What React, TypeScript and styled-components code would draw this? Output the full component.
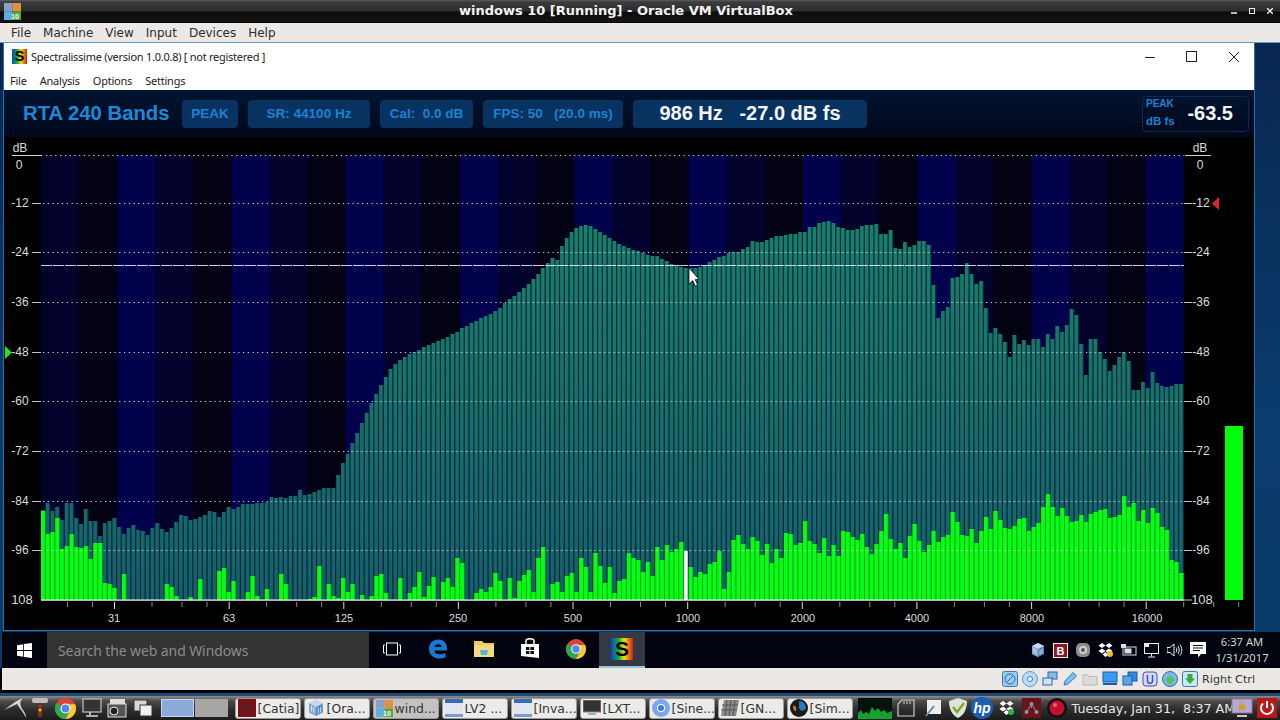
import React from "react";
import styled, { createGlobalStyle } from "styled-components";

const Global = createGlobalStyle`
  html, body { margin: 0; padding: 0; background: #000; overflow: hidden; }
  * { box-sizing: border-box; }
`;

const TEAL = [
  510,503,511,507,520,503,503,518,524,509, 521,521,536,523,521,518,527,534,528,525,
  530,531,535,528,523,529,532,528,522,515, 516,520,519,517,515,511,512,517,512,507,
  509,507,504,504,504,503,503,502,497,498, 497,498,496,496,490,495,494,492,490,488,
  488,488,475,463,454,443,433,423,413,403, 394,385,377,369,364,360,357,354,352,350,
  347,345,343,341,339,337,334,332,328,326, 323,321,318,316,314,311,308,303,299,296,
  292,288,284,279,274,268,263,258,260,246, 238,232,228,226,225,226,229,232,235,238,
  241,244,246,248,250,251,253,255,256,256, 259,261,264,265,267,268,268,268,267,265,
  262,260,257,256,253,252,252,249,247,241, 242,242,240,238,236,236,235,
  234,234,232,232,227,227,223,222,221,223,227,228,230,230,229,226,225,225,224,234,234,230,
  248,249,242,247,245,241,241,245,285,318,311,307,278,277,274,263,274,284,281,308,
  333,328,334,342,357,335,344,340,345,339,339,347,334,339,326,332,325,309,315,
  344,375,339,339,352,359,371,365,357,352,361,390,390,382,388,372,383,386,387,386,384,384,
];

const GREEN = [
  511,534,532,518,549,546,534,547,548,546, 559,543,543,583,584,588,600,574,600,600,
  600,600,600,600,600,600,584,587,596,600, 600,597,600,579,600,600,600,571,568,592,
  581,600,600,592,576,596,600,589,600,600, 574,584,600,600,600,600,599,597,566,600,
  584,596,598,578,592,584,600,595,600,596, 576,574,593,600,600,578,600,593,587,572,
  597,586,577,600,582,578,587,558,563,600, 600,593,589,592,587,573,581,600,578,598,
  581,575,570,592,558,547,600,584,582,592, 576,573,592,558,567,592,553,566,583,567,
  593,581,579,553,558,560,572,562,576,547, 560,545,552,549,542,551,567,577,572,574,
  564,562,551,589,572,540,535,544,549,537, 541,555,544,563,549,558,533,534,545,543,
  521,541,544,553,538,556,545,556,531,532, 537,540,534,547,554,544,531,514,539,549,
  543,558,536,524,541,552,545,531,542,537, 535,512,522,535,536,529,543,531,517,529,
  511,520,528,529,526,519,518,531,527,523, 507,494,507,516,508,516,522,521,515,522,
  514,512,510,509,518,517,515,496,507,503, 521,510,523,508,513,527,530,560,562,573,
];

const PITCH = 4.7625;
const LEFT = 41;
const barX = (i: number) => LEFT + i * PITCH;
const GRID = [
  { y: 203.5, label: "-12" }, { y: 252.5, label: "-24" }, { y: 302.5, label: "-36" }, { y: 352.5, label: "-48" },
  { y: 401.5, label: "-60" }, { y: 451.5, label: "-72" }, { y: 501.5, label: "-84" }, { y: 550.5, label: "-96" },
];
const FREQS = [
  [114, "31"], [229, "63"], [344, "125"], [458, "250"], [573, "500"],
  [688, "1000"], [803, "2000"], [917, "4000"], [1032, "8000"], [1147, "16000"],
] as const;
const STRIPES = ["#02022c", "#020212", "#01014c"];

function gridPaths(y: number) {
  let on = "";
  let off = "";
  TEAL.forEach((top, i) => {
    const x = barX(i);
    if (top <= y) on += `M${(x + 0.5).toFixed(2)} ${y}h2.4`;
    else off += `M${(x + 2).toFixed(2)} ${y}h1.2`;
  });
  return { on, off };
}
const minorTicks: number[] = [];
const majorTicks: number[] = [114.5, 229.2, 343.8, 458.4, 573, 687.7, 802.3, 916.9, 1031.6, 1146.2];
majorTicks.forEach((m) => {
  [-47, -22, 37.5, 67.5, 92.5].forEach((d, k) => {
    if (k < 2 && m !== 114.5) return;
    minorTicks.push(m + d);
  });
});

const AxisText = styled.text<{ $size?: number }>`
  font-family: "Liberation Sans", Arial, sans-serif;
  font-size: ${(p) => p.$size ?? 12}px;
  fill: #dcdcdc;
  text-anchor: middle;
  dominant-baseline: central;
`;
const ChartSvg = styled.svg`
  display: block;
  flex: 1;
  width: 100%;
  background: #000;
`;

function Chart() {
  return (
    <ChartSvg viewBox="4 137 1250 493">
      <defs>
        <linearGradient id="teal" gradientUnits="userSpaceOnUse" x1="0" y1="220" x2="0" y2="600">
          <stop offset="0" stopColor="#17806c" />
          <stop offset="1" stopColor="#15606e" />
        </linearGradient>
      </defs>
      {Array.from({ length: 30 }, (_, k) => (
        <rect key={k} x={LEFT + k * 38.1} y={155} width={38.2} height={445} fill={STRIPES[k % 3]} />
      ))}
      {TEAL.map((top, i) => (
        <g key={i}>
          <rect x={barX(i)} y={top} width={PITCH} height={600 - top} fill="#082c34" />
          <rect x={barX(i)} y={top} width={3.5} height={600 - top} fill="url(#teal)" />
        </g>
      ))}
      {GREEN.map((top, i) =>
        top < 600 ? (
          <g key={i}>
            <rect x={barX(i)} y={top} width={PITCH} height={600 - top} fill={i === 135 ? "#082c34" : "#08a014"} />
            <rect x={barX(i)} y={top} width={3.8} height={600 - top} fill={i === 135 ? "#fff" : "#04ff14"} />
          </g>
        ) : null,
      )}
      {GRID.map((g) => {
        const { on, off } = gridPaths(g.y);
        return (
          <g key={g.y}>
            <path d={on} stroke="#d8eeee" strokeWidth={1} opacity={0.5} />
            <path d={off} stroke="#fff" strokeWidth={1} opacity={0.85} />
            <path d={`M32 ${g.y}H41M1184 ${g.y}H1192`} stroke="#c4c4c4" strokeWidth={1} />
            <AxisText x={20} y={g.y - 0.5}>{g.label}</AxisText>
            <AxisText x={1201} y={g.y - 0.5}>{g.label}</AxisText>
          </g>
        );
      })}
      <path d="M41 155.5H1184" stroke="#fff" strokeWidth={1} strokeDasharray="1.2 3.56" opacity={0.85} />
      <path d="M12 155.5H41M1185 155.5H1211" stroke="#d0d0d0" strokeWidth={1} />
      <AxisText x={20} y={148}>dB</AxisText>
      <AxisText x={19} y={165}>0</AxisText>
      <AxisText x={1200} y={148}>dB</AxisText>
      <AxisText x={1200} y={165}>0</AxisText>
      <AxisText x={22} y={599} $size={13}>108</AxisText>
      <AxisText x={1202} y={599} $size={13}>108</AxisText>
      <path d="M1184 600H1192" stroke="#c4c4c4" strokeWidth={1} />
      <path d="M41 265.5H1184" stroke="#e4e4ff" strokeWidth={1} strokeDasharray="11 1" opacity={0.9} />
      <rect x={41} y={599.5} width={1143} height={1.2} fill="#fff" />
      {minorTicks.map((x) => (
        <path key={x} d={`M${x} 602V607`} stroke="#8c8c8c" strokeWidth={1} />
      ))}
      {majorTicks.map((x) => (
        <path key={x} d={`M${x} 602V609`} stroke="#e0e0e0" strokeWidth={1} />
      ))}
      {FREQS.map(([x, t]) => (
        <AxisText key={t} x={x} y={618} $size={11}>{t}</AxisText>
      ))}
      <rect x={1225} y={426} width={18} height={174} fill="#00ff0a" />
      <path d="M5 346V359L12 352.5Z" fill="#22e32a" />
      <path d="M1219 197V210L1212 203.5Z" fill="#e0202a" />
      <path d="M689 268V284L692.8 280.6L695.2 286L697.6 285L695.2 279.6L699 279.2Z" fill="#fff" stroke="#000" strokeWidth={0.7} />
    </ChartSvg>
  );
}

/* ---------- Icons ---------- */
const IconSvg = styled.svg`
  display: block;
  flex: none;
`;
type I = { s?: number };

const Chrome = ({ s = 20 }: I) => (
  <IconSvg width={s} height={s} viewBox="0 0 20 20">
    <circle cx="10" cy="10" r="10" fill="#db4437" />
    <path d="M10 10L1.3 5A10 10 0 0 0 10 20L15 11Z" fill="#2da94f" />
    <path d="M10 6H19.2A10 10 0 0 1 10 20L15 11Z" fill="#fcc934" />
    <circle cx="10" cy="10" r="4.8" fill="#fff" />
    <circle cx="10" cy="10" r="3.7" fill="#4a8af0" />
  </IconSvg>
);
const SpectralIcon = ({ s = 15, id }: I & { id: string }) => (
  <IconSvg width={s} height={s} viewBox="0 0 20 20">
    <defs>
      <linearGradient id={id} x1="0" y1="0" x2="1" y2="0">
        <stop offset="0" stopColor="#1040d0" />
        <stop offset="0.35" stopColor="#10b040" />
        <stop offset="0.6" stopColor="#f0e010" />
        <stop offset="1" stopColor="#e01818" />
      </linearGradient>
    </defs>
    <rect width="20" height="20" fill={`url(#${id})`} />
    <text x="10" y="16.5" textAnchor="middle" fontFamily="Liberation Sans" fontWeight="700" fontSize="19" fill="#000">S</text>
  </IconSvg>
);
const WinLogo = () => (
  <IconSvg width={15} height={15} viewBox="0 0 15 15">
    <path d="M0 2.2L6.2 1.2V7H0ZM7 1L15 0V7H7ZM0 8H6.2V13.8L0 12.8ZM7 8H15V15L7 14Z" fill="#fff" />
  </IconSvg>
);
const TaskView = () => (
  <IconSvg width={18} height={14} viewBox="0 0 18 14">
    <rect x="3.5" y="1" width="11" height="12" fill="none" stroke="#fff" />
    <path d="M2 3H.5V11H2M16 3H17.5V11H16" fill="none" stroke="#fff" />
  </IconSvg>
);
const Edge = () => (
  <IconSvg width={20} height={20} viewBox="0 0 20 20">
    <path d="M1 10C1 4 5 .5 10.5.5C16 .5 19.5 4.5 19 11.5H6.5C6.8 15.5 12 16.5 17.5 14V18.5C11 21 1.5 19.5 1 10ZM6.5 8H13.5C13.5 4 7.5 4 6.5 8Z" fill="#1a78d2" />
  </IconSvg>
);
const Folder = () => (
  <IconSvg width={20} height={18} viewBox="0 0 20 18">
    <path d="M0 1H8L10 3H20V17H0Z" fill="#e9c96a" />
    <rect y="5" width="20" height="12" fill="#f5d97e" />
    <path d="M6 10H14L13 15H7Z" fill="#4cb8d8" />
  </IconSvg>
);
const Store = () => (
  <IconSvg width={20} height={22} viewBox="0 0 20 22">
    <path d="M1 6H19V20L1 18Z" fill="#fff" />
    <path d="M6 6V3C6 0 14 0 14 3V6" fill="none" stroke="#fff" strokeWidth="1.5" />
    <path d="M6 9H9.4V12H6ZM10.4 9H14V12H10.4ZM6 13H9.4V16H6ZM10.4 13H14V16H10.4Z" fill="#111" />
  </IconSvg>
);
const VBoxCube = ({ s = 16 }: I) => (
  <IconSvg width={s} height={s} viewBox="0 0 16 16">
    <path d="M8 1L14 4V12L8 15L2 12V4Z" fill="#5a86c0" />
    <path d="M8 1L14 4L8 7L2 4Z" fill="#c8d8ee" />
    <path d="M8 7V15L2 12V4Z" fill="#8aa8d0" />
    <path d="M4 6V11M6 7V12M10 8V13M12 7V12" stroke="#e8eef8" strokeWidth=".7" />
  </IconSvg>
);
const TrayB = () => (
  <IconSvg width={15} height={15} viewBox="0 0 15 15">
    <rect width="15" height="15" fill="#eee" />
    <rect x="1" y="1" width="13" height="13" fill="#8a1820" />
    <text x="7.5" y="11.5" textAnchor="middle" fontFamily="Liberation Sans" fontWeight="700" fontSize="11" fill="#fff">B</text>
  </IconSvg>
);
const TrayWebcam = () => (
  <IconSvg width={16} height={16} viewBox="0 0 16 16">
    <rect x="1" y="1" width="14" height="14" rx="5" fill="#8d8d8d" />
    <circle cx="8" cy="8" r="4" fill="#d0d0d0" />
    <circle cx="8" cy="8" r="2" fill="#555" />
  </IconSvg>
);
const Dropbox = ({ color = "#fff", badge }: { color?: string; badge: string }) => (
  <IconSvg width={16} height={16} viewBox="0 0 16 16">
    <path d="M4 1L7.5 3.5L4 6L.5 3.5ZM11 1L14.5 3.5L11 6L7.5 3.5ZM4 6.5L7.5 9L4 11.5L.5 9ZM11 6.5L14.5 9L11 11.5L7.5 9ZM7.5 10L10.5 12.5L7.5 15L4.5 12.5Z" fill={color} />
    <circle cx="12" cy="12" r="3" fill={badge} />
  </IconSvg>
);
const TrayPower = () => (
  <IconSvg width={16} height={12} viewBox="0 0 16 12">
    <rect x="0" y="0" width="5" height="4" fill="#ddd" />
    <rect x="2" y="3" width="13" height="8" fill="none" stroke="#ddd" />
    <rect x="3.5" y="4.5" width="7" height="5" fill="#ddd" />
  </IconSvg>
);
const TrayNet = () => (
  <IconSvg width={16} height={15} viewBox="0 0 16 15">
    <rect x=".5" y=".5" width="14" height="10" fill="none" stroke="#eee" />
    <path d="M7.5 11V13.5M4 14H11" stroke="#eee" />
    <rect x="0" y="0" width="5" height="4" fill="#eee" />
  </IconSvg>
);
const TraySpeaker = () => (
  <IconSvg width={16} height={14} viewBox="0 0 16 14">
    <path d="M0 4.5H3L7 1V13L3 9.5H0Z" fill="none" stroke="#eee" />
    <path d="M9 4.5C10 6 10 8 9 9.5M11 3C12.6 5.5 12.6 8.5 11 11M13 1.5C15.4 5 15.4 9 13 12.5" fill="none" stroke="#eee" />
  </IconSvg>
);
const TrayNote = () => (
  <IconSvg width={16} height={16} viewBox="0 0 16 16">
    <path d="M0 0H16V12H11L8 15.5V12H0Z" fill="#fff" />
    <path d="M3 3.5H13M3 6H13M3 8.5H10" stroke="#111" />
  </IconSvg>
);
const Sb = ({ children }: { children: React.ReactNode }) => (
  <IconSvg width={16} height={16} viewBox="0 0 16 16">{children}</IconSvg>
);
const StatusIcons = [
  <Sb key="0"><rect x=".5" y=".5" width="15" height="15" rx="2" fill="#9ccbef" stroke="#3a7ab8" /><circle cx="8" cy="8" r="5" fill="none" stroke="#2a70b0" /><path d="M5 11L11 5" stroke="#2a70b0" /></Sb>,
  <Sb key="1"><circle cx="8" cy="8" r="7.5" fill="#bcdcf4" stroke="#5a9ad0" /><circle cx="8" cy="8" r="2.5" fill="#fff" stroke="#3a7ab8" /></Sb>,
  <Sb key="2"><rect x="6" y="1" width="9" height="7" fill="#8cb8e4" stroke="#2a66a8" /><rect x="1" y="7" width="9" height="7" fill="#cfe2f6" stroke="#2a66a8" /></Sb>,
  <Sb key="3"><path d="M2 14L3 10L11 1.5L14.5 5L6 13Z" fill="#7cc0f0" stroke="#2a78c0" /></Sb>,
  <Sb key="4"><path d="M1 4H6L7 5.5H15V14H1Z" fill="#dcdcd8" stroke="#b8b8b4" /></Sb>,
  <Sb key="5"><rect x="1" y="1" width="14" height="10" fill="#3a9af0" stroke="#1a5ca8" /><path d="M1 13H15" stroke="#1a5ca8" strokeWidth="2" /></Sb>,
  <Sb key="6"><rect x="6" y="1" width="9" height="9" fill="#3a86dc" stroke="#1a5ca8" /><rect x="1" y="5" width="9" height="9" fill="#5aa4ec" stroke="#1a5ca8" /></Sb>,
  <Sb key="7"><rect x="1" y="1" width="14" height="14" rx="3" fill="#d8d8f4" stroke="#3a50b8" /><path d="M5.5 4V10C5.5 13 10.5 13 10.5 10V4" fill="none" stroke="#3a50b8" strokeWidth="1.5" /></Sb>,
  <Sb key="8"><circle cx="8" cy="8" r="7.5" fill="#7cb8ec" stroke="#2a70b0" /><path d="M3 9L8 4L13 9L8 14Z" fill="#58c058" /></Sb>,
  <Sb key="9"><rect x=".5" y=".5" width="15" height="15" rx="2" fill="#cfe4f6" stroke="#3a7ab8" /><path d="M5.5 3H10.5V7.5H13L8 13L3 7.5H5.5Z" fill="#2fb03a" /></Sb>,
];
const Dragon = () => (
  <IconSvg width={24} height={22} viewBox="0 0 24 22">
    <path d="M1 13C7 9 12 4 20 1C17 4 16 7 20 13C22 16 23 18 23 21C21 16 17 12 14 7C10 9 5 11 1 13Z" fill="#d4d4d4" />
  </IconSvg>
);
const Usb = () => (
  <IconSvg width={16} height={22} viewBox="0 0 16 22">
    <rect x="0" y="1" width="16" height="5" rx="2" fill="#bdbdbd" />
    <rect x="6" y="6" width="4" height="14" fill="#8a2a18" />
    <circle cx="8" cy="13" r="1.5" fill="#e8c030" />
  </IconSvg>
);
const Monitor = () => (
  <IconSvg width={20} height={20} viewBox="0 0 20 20">
    <rect x="1" y="1" width="18" height="13" fill="#333" stroke="#ddd" />
    <path d="M8 14V17M4 18H16" stroke="#ddd" strokeWidth="1.5" />
  </IconSvg>
);
const Camera = () => (
  <IconSvg width={20} height={20} viewBox="0 0 20 20">
    <rect x="3" y="1" width="15" height="5" fill="#ddd" />
    <rect x="1" y="6" width="18" height="13" fill="#555" stroke="#ddd" />
    <circle cx="7" cy="13" r="4" fill="#222" stroke="#eee" />
  </IconSvg>
);
const Windows = () => (
  <IconSvg width={20} height={18} viewBox="0 0 20 18">
    <rect x="1" y="1" width="13" height="11" fill="#d8d8d8" stroke="#333" />
    <rect x="7" y="6" width="12" height="11" fill="#efefef" stroke="#333" />
  </IconSvg>
);
const VBoxApp = () => (
  <IconSvg width={17} height={17} viewBox="0 0 17 17">
    <rect x="0" y="0" width="8.5" height="8.5" fill="#8aa0c8" />
    <rect x="8.5" y="0" width="8.5" height="8.5" fill="#e09040" />
    <rect x="0" y="8.5" width="8.5" height="8.5" fill="#5cb0e0" />
    <rect x="8.5" y="8.5" width="8.5" height="8.5" fill="#50a840" />
    <text x="11" y="15.5" textAnchor="middle" fontFamily="Liberation Sans" fontWeight="700" fontSize="7" fill="#fff">10</text>
  </IconSvg>
);
const Catia = () => (
  <IconSvg width={18} height={18} viewBox="0 0 18 18">
    <rect width="18" height="18" fill="#7a1018" />
    <path d="M4 4L14 13M4 10L9 13" stroke="#333" strokeWidth="1.6" />
  </IconSvg>
);
const BlueWin = () => (
  <IconSvg width={18} height={18} viewBox="0 0 18 18">
    <rect width="18" height="18" fill="#dfe6f0" />
    <rect width="18" height="4" fill="#3a6cb0" />
    <rect y="15" width="18" height="3" fill="#7a9cc8" />
  </IconSvg>
);
const LxtMon = () => (
  <IconSvg width={18} height={16} viewBox="0 0 18 16">
    <rect x="0" y="0" width="18" height="12" fill="#333" stroke="#888" />
    <path d="M5 14H13" stroke="#aaa" strokeWidth="2" />
  </IconSvg>
);
const BlueChrome = () => (
  <IconSvg width={18} height={18} viewBox="0 0 18 18">
    <circle cx="9" cy="9" r="9" fill="#7ea6ec" />
    <circle cx="9" cy="9" r="4" fill="#fff" />
    <circle cx="9" cy="9" r="3" fill="#3c78d8" />
  </IconSvg>
);
const Gnd = () => (
  <IconSvg width={18} height={16} viewBox="0 0 18 16">
    <path d="M3 0H18L15 16H0Z" fill="#8a8a8a" />
    <path d="M6 0L4 16M10 0L8 16M14 0L12 16M1 5H17M0 10H16" stroke="#555" />
  </IconSvg>
);
const Globe = () => (
  <IconSvg width={18} height={18} viewBox="0 0 18 18">
    <circle cx="9" cy="9" r="9" fill="#1b1b1b" />
    <path d="M9 2A7 7 0 0 1 16 9C14 13 10 12 9 9Z" fill="#2a7ab8" />
    <path d="M3 7C5 6 7 8 6 12C4 12 3 10 3 7Z" fill="#c87830" />
  </IconSvg>
);
const SdCard = () => (
  <IconSvg width={18} height={18} viewBox="0 0 18 18">
    <path d="M5 1H17V17H1V5Z" fill="none" stroke="#ccc" strokeWidth="1.2" />
    <path d="M7 2V5M10 2V5M13 2V5" stroke="#ccc" />
  </IconSvg>
);
const PenNote = () => (
  <IconSvg width={16} height={17} viewBox="0 0 16 17">
    <rect x="2" y="0" width="14" height="14" fill="#eee" />
    <path d="M1 16L9 6" stroke="#6a86b8" strokeWidth="2" />
  </IconSvg>
);
const Shield = () => (
  <IconSvg width={18} height={20} viewBox="0 0 18 20">
    <path d="M9 0L18 3C18 11 15 17 9 20C3 17 0 11 0 3Z" fill="#dfe3d8" />
    <path d="M4 9L8 14L15 5" fill="none" stroke="#7aa830" strokeWidth="2.4" />
  </IconSvg>
);
const Hp = () => (
  <IconSvg width={22} height={22} viewBox="0 0 22 22">
    <circle cx="11" cy="11" r="11" fill="#1a5fb4" />
    <text x="11" y="16" textAnchor="middle" fontFamily="Liberation Sans" fontStyle="italic" fontWeight="700" fontSize="14" fill="#fff">hp</text>
  </IconSvg>
);
const RedNet = () => (
  <IconSvg width={19} height={20} viewBox="0 0 19 20">
    <rect width="19" height="20" fill="#6a1418" />
    <circle cx="9.5" cy="6" r="2" fill="#8a90b0" />
    <circle cx="4.5" cy="14" r="2" fill="#8a90b0" />
    <circle cx="14.5" cy="14" r="2" fill="#8a90b0" />
    <path d="M9.5 6L4.5 14M9.5 6L14.5 14M9.5 10V6" stroke="#8a90b0" />
  </IconSvg>
);
const Record = () => (
  <IconSvg width={20} height={20} viewBox="0 0 20 20">
    <circle cx="10" cy="10" r="10" fill="#111" />
    <circle cx="10" cy="10" r="7.5" fill="#c41030" />
    <circle cx="8" cy="7" r="2" fill="#ee6070" />
  </IconSvg>
);
const LockScreen = () => (
  <IconSvg width={22} height={20} viewBox="0 0 22 20">
    <rect x="1" y="1" width="20" height="14" fill="#b8a8d8" stroke="#8a7aa8" />
    <path d="M6 18H16" stroke="#ccc" strokeWidth="2" />
    <rect x="8" y="7" width="6" height="5" fill="#d0a020" />
    <path d="M9 7V5C9 3 13 3 13 5V7" fill="none" stroke="#d0a020" />
  </IconSvg>
);
const PowerBtn = () => (
  <IconSvg width={20} height={20} viewBox="0 0 20 20">
    <rect width="20" height="20" fill="#b81818" />
    <path d="M6 5.5A6 6 0 1 0 14 5.5" fill="none" stroke="#fff" strokeWidth="2" />
    <path d="M10 3V10" stroke="#fff" strokeWidth="2" />
  </IconSvg>
);

/* ---------- Layout ---------- */
const Screen = styled.div`
  width: 1280px;
  height: 720px;
  display: flex;
  flex-direction: column;
  background: #000;
  overflow: hidden;
`;
const HostTitle = styled.div`
  position: relative;
  height: 23px;
  flex: none;
  display: flex;
  align-items: center;
  justify-content: space-between;
  padding: 0 7px 0 4px;
  background: linear-gradient(#5c5c5c 0, #3c3c3c 2px, #2c2c2c 11px, #0c0c0c 12px, #141414 100%);
  border-bottom: 1px solid #000;
`;
const HostTitleText = styled.div`
  position: absolute;
  left: 459px;
  top: 2px;
  font: bold 13px "DejaVu Sans", sans-serif;
  line-height: 17px;
  color: #f4f4f4;
  white-space: nowrap;
`;
const HostButtons = styled.div`
  display: flex;
  gap: 12px;
  align-items: center;
`;
const HostMenu = styled.div`
  height: 19px;
  flex: none;
  display: flex;
  gap: 12px;
  align-items: center;
  padding-left: 11px;
  background: #ece8e6;
  font: 12px "DejaVu Sans", sans-serif;
  color: #2c2c2c;
`;
const Guest = styled.div`
  height: 626px;
  flex: none;
  display: flex;
  flex-direction: column;
  border-top: 1px solid #5d9ccb;
  background: linear-gradient(#082650, #0b3c6e 60%, #0a3a68);
`;
const Win = styled.div`
  width: 1252px;
  height: 588px;
  margin-left: 3px;
  flex: none;
  display: flex;
  flex-direction: column;
  background: #000;
  border: 1px solid #2f6ea4;
  border-top: 0;
`;
const WinTitle = styled.div`
  height: 27px;
  flex: none;
  display: flex;
  align-items: center;
  padding: 0 14px 0 8px;
  background: #fff;
`;
const WinTitleText = styled.span`
  margin-left: 4px;
  font: 11px "Noto Sans", sans-serif;
  letter-spacing: -0.26px;
  color: #222;
  white-space: pre;
`;
const WinButtons = styled.div`
  margin-left: auto;
  display: flex;
  gap: 30px;
  align-items: center;
`;
const WinMenu = styled.div`
  height: 20px;
  flex: none;
  display: flex;
  gap: 13px;
  align-items: center;
  padding-left: 6px;
  background: #fff;
  font: 11px "Noto Sans", sans-serif;
  letter-spacing: -0.22px;
  color: #222;
`;
const Header = styled.div`
  height: 47px;
  flex: none;
  display: flex;
  align-items: center;
  padding: 0 5px 0 19px;
  background: linear-gradient(#021531, #00081c);
`;
const AppTitle = styled.div`
  width: 159px;
  flex: none;
  font: bold 20.3px "Liberation Sans", Arial, sans-serif;
  color: #1e88d8;
  white-space: nowrap;
`;
const Pill = styled.div<{ $w: number; $bright?: boolean }>`
  width: ${(p) => p.$w}px;
  height: 28px;
  flex: none;
  margin-right: 10px;
  display: flex;
  align-items: center;
  justify-content: center;
  border-radius: 4px;
  background: #083260;
  font: ${(p) => (p.$bright ? "bold 20px" : "bold 13.5px")} "Liberation Sans", Arial, sans-serif;
  color: ${(p) => (p.$bright ? "#f2f6fa" : "#1c82d2")};
  white-space: pre;
`;
const PeakBox = styled.div`
  margin-left: auto;
  width: 107px;
  height: 36px;
  flex: none;
  position: relative;
  display: flex;
  align-items: center;
  justify-content: flex-end;
  padding-right: 15px;
  border: 1px solid #0b2a4e;
  border-radius: 4px;
  font: bold 20px "Liberation Sans", Arial, sans-serif;
  color: #f2f6fa;
`;
const PeakCaption = styled.div`
  position: absolute;
  left: 3px;
  top: 0;
  bottom: 0;
  display: flex;
  flex-direction: column;
  justify-content: space-between;
  color: #1c82d2;
  font-family: "Liberation Sans", Arial, sans-serif;
  font-weight: bold;
`;
const PeakTop = styled.span`
  font-size: 10px;
  line-height: 13px;
`;
const PeakUnit = styled.span`
  font-size: 11.5px;
  line-height: 19px;
`;
const Taskbar = styled.div`
  height: 36px;
  margin: 1px 0 0 2px;
  flex: none;
  display: flex;
  align-items: stretch;
  background: #01040e;
`;
const StartCell = styled.div`
  width: 45px;
  flex: none;
  display: flex;
  align-items: center;
  justify-content: center;
`;
const SearchBox = styled.div`
  width: 322px;
  flex: none;
  display: flex;
  align-items: center;
  padding-left: 11px;
  background: #333;
  font: 14px "Noto Sans", sans-serif;
  color: #8c8c8c;
  letter-spacing: -0.1px;
`;
const TaskCell = styled.div<{ $active?: boolean }>`
  width: 46px;
  flex: none;
  display: flex;
  align-items: center;
  justify-content: center;
  background: ${(p) => (p.$active ? "#333a44" : "transparent")};
  border-bottom: 2px solid ${(p) => (p.$active ? "#9cc4e4" : "transparent")};
`;
const Tray = styled.div`
  margin-left: auto;
  display: flex;
  align-items: center;
  gap: 7px;
  padding-right: 9px;
`;
const Clock = styled.div`
  width: 58px;
  text-align: center;
  font: 11.2px "Noto Sans", sans-serif;
  line-height: 16px;
  color: #d4d4d4;
  white-space: nowrap;
`;
const HostStatus = styled.div`
  height: 22px;
  margin-left: 2px;
  flex: none;
  display: flex;
  align-items: center;
  justify-content: flex-end;
  gap: 4px;
  padding-right: 25px;
  background: #ece8e6;
`;
const RightCtrl = styled.span`
  font: 11.2px "DejaVu Sans", sans-serif;
  color: #333;
  white-space: nowrap;
`;
const PanelStrip = styled.div`
  height: 30px;
  flex: none;
  padding-top: 6px;
  background: linear-gradient(#000 0, #000 3px, #1f4a72 3px, #1f4a72 6px, transparent 6px);
`;
const Panel = styled.div`
  height: 24px;
  display: flex;
  align-items: center;
  background: linear-gradient(#8c8c8c 0, #4a4a4a 5px, #2c2c2c 14px, #1c1c1c 100%);
`;
const PanelCell = styled.div<{ $w?: number }>`
  width: ${(p) => p.$w ?? 25.6}px;
  flex: none;
  display: flex;
  align-items: center;
  justify-content: center;
`;
const PanelIcons = styled.div`
  display: flex;
  padding-left: 2px;
`;
const Workspace = styled.div<{ $on?: boolean }>`
  width: 33px;
  height: 18px;
  flex: none;
  margin-left: ${(p) => (p.$on ? 5 : 1)}px;
  background: ${(p) => (p.$on ? "#8caad8" : "#a8a6a4")};
  border: 1px solid ${(p) => (p.$on ? "#c8d8f0" : "#a8a6a4")};
`;
const Tasks = styled.div`
  display: flex;
  gap: 3px;
  margin-left: 7px;
`;
const TaskBtn = styled.div<{ $active?: boolean }>`
  width: 66px;
  height: 21px;
  flex: none;
  display: flex;
  align-items: center;
  gap: 2px;
  padding-left: 2px;
  border: 1px solid #9a9a9a;
  border-radius: 3px;
  background: ${(p) => (p.$active ? "#c4c2c0" : "#ecebea")};
  font: 12.4px "DejaVu Sans", sans-serif;
  color: #333;
  white-space: nowrap;
`;
const CpuGraph = styled.svg`
  display: block;
  flex: none;
  margin-left: 5px;
`;
const PanelClock = styled.div`
  width: 158px;
  flex: none;
  margin-left: 2px;
  font: 12.7px "DejaVu Sans", sans-serif;
  color: #e8e8e8;
  white-space: pre;
`;

const taskButtons: [React.ReactNode, string, boolean?][] = [
  [<Catia />, "[Catia]"],
  [<VBoxCube s={18} />, "[Ora..."],
  [<VBoxApp />, "wind...", true],
  [<BlueWin />, "LV2 ..."],
  [<BlueWin />, "[Inva..."],
  [<LxtMon />, "[LXT..."],
  [<BlueChrome />, "[Sine..."],
  [<Gnd />, "[GN..."],
  [<Globe />, "[Sim..."],
];

export default function App() {
  return (
    <Screen>
      <Global />
      <HostTitle>
        <VBoxApp />
        <HostTitleText>windows 10 [Running] - Oracle VM VirtualBox</HostTitleText>
        <HostButtons>
          <IconSvg width={6} height={6} viewBox="0 0 6 6"><path d="M0 5H6" stroke="#eee" strokeWidth="1.5" /></IconSvg>
          <IconSvg width={6} height={6} viewBox="0 0 6 6"><rect x=".5" y=".5" width="5" height="5" fill="none" stroke="#eee" /></IconSvg>
          <IconSvg width={6} height={6} viewBox="0 0 6 6"><path d="M0 0L6 6M6 0L0 6" stroke="#eee" strokeWidth="1.4" /></IconSvg>
        </HostButtons>
      </HostTitle>
      <HostMenu>
        <span>File</span><span>Machine</span><span>View</span><span>Input</span><span>Devices</span><span>Help</span>
      </HostMenu>
      <Guest>
        <Win>
          <WinTitle>
            <SpectralIcon id="sp1" />
            <WinTitleText>Spectralissime (version 1.0.0.8) [ not registered ]</WinTitleText>
            <WinButtons>
              <IconSvg width={12} height={12} viewBox="0 0 12 12"><path d="M1 6.5H11" stroke="#222" /></IconSvg>
              <IconSvg width={12} height={12} viewBox="0 0 12 12"><rect x=".5" y=".5" width="10" height="10" fill="none" stroke="#222" /></IconSvg>
              <IconSvg width={12} height={12} viewBox="0 0 12 12"><path d="M1 1L11 11M11 1L1 11" stroke="#222" /></IconSvg>
            </WinButtons>
          </WinTitle>
          <WinMenu>
            <span>File</span><span>Analysis</span><span>Options</span><span>Settings</span>
          </WinMenu>
          <Header>
            <AppTitle>RTA 240 Bands</AppTitle>
            <Pill $w={56}>PEAK</Pill>
            <Pill $w={122}>SR: 44100 Hz</Pill>
            <Pill $w={93}>{"Cal:  0.0 dB"}</Pill>
            <Pill $w={140}>{"FPS: 50   (20.0 ms)"}</Pill>
            <Pill $w={234} $bright>{"986 Hz   -27.0 dB fs"}</Pill>
            <PeakBox>
              <PeakCaption><PeakTop>PEAK</PeakTop><PeakUnit>dB fs</PeakUnit></PeakCaption>
              -63.5
            </PeakBox>
          </Header>
          <Chart />
        </Win>
        <Taskbar>
          <StartCell><WinLogo /></StartCell>
          <SearchBox>Search the web and Windows</SearchBox>
          <TaskCell><TaskView /></TaskCell>
          <TaskCell><Edge /></TaskCell>
          <TaskCell><Folder /></TaskCell>
          <TaskCell><Store /></TaskCell>
          <TaskCell><Chrome /></TaskCell>
          <TaskCell $active><SpectralIcon s={22} id="sp2" /></TaskCell>
          <Tray>
            <VBoxCube />
            <TrayB />
            <TrayWebcam />
            <Dropbox badge="#e8c030" />
            <TrayPower />
            <TrayNet />
            <TraySpeaker />
            <TrayNote />
            <Clock>6:37 AM<br />1/31/2017</Clock>
          </Tray>
        </Taskbar>
      </Guest>
      <HostStatus>
        {StatusIcons}
        <RightCtrl>Right Ctrl</RightCtrl>
      </HostStatus>
      <PanelStrip>
        <Panel>
          <PanelIcons>
            <PanelCell><Dragon /></PanelCell>
            <PanelCell><Usb /></PanelCell>
            <PanelCell><Chrome s={21} /></PanelCell>
            <PanelCell><Monitor /></PanelCell>
            <PanelCell><Camera /></PanelCell>
            <PanelCell><Windows /></PanelCell>
          </PanelIcons>
          <Workspace $on />
          <Workspace />
          <Tasks>
            {taskButtons.map(([icon, label, active]) => (
              <TaskBtn key={label} $active={active}>{icon}{label}</TaskBtn>
            ))}
          </Tasks>
          <CpuGraph width={34} height={21} viewBox="0 0 34 21">
            <rect width="34" height="21" fill="#04140a" />
            <path d="M0 21V15L3 12L5 16L8 14L11 16L14 9L17 13L20 10L23 14L26 12L29 15L34 13V21Z" fill="#18a030" />
          </CpuGraph>
          <PanelCell $w={28}><SdCard /></PanelCell>
          <PanelCell $w={26}><PenNote /></PanelCell>
          <PanelCell $w={24}><Shield /></PanelCell>
          <PanelCell $w={24}><Hp /></PanelCell>
          <PanelCell $w={26}><Dropbox badge="#30b050" /></PanelCell>
          <PanelCell $w={24}><RedNet /></PanelCell>
          <PanelCell $w={26}><Record /></PanelCell>
          <PanelClock>Tuesday, Jan 31,  8:37 AM</PanelClock>
          <PanelCell $w={25}><LockScreen /></PanelCell>
          <PanelCell $w={25}><PowerBtn /></PanelCell>
        </Panel>
      </PanelStrip>
    </Screen>
  );
}
